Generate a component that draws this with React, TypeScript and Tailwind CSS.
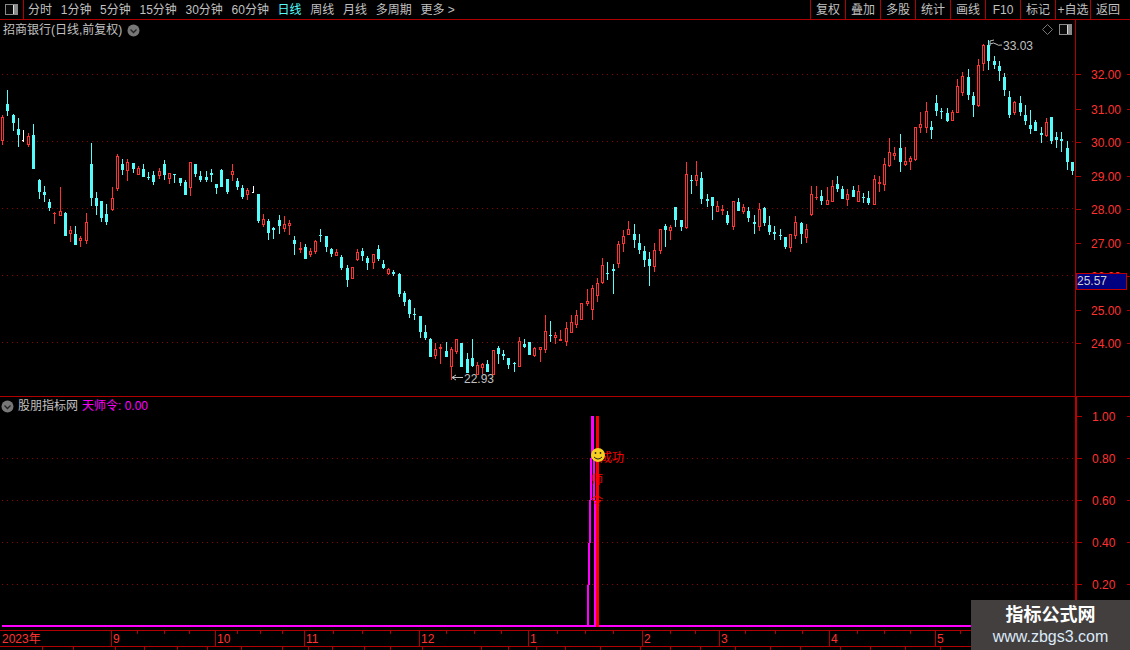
import React from "react";

type Candle = [number, number, number, number, number, "c" | "r" | "w"];

const candles: Candle[] = [
  [2, 117, 141, 115, 145, "r"], [7, 104, 111, 90, 116, "c"], [13, 115, 123, 114, 131, "c"], [18, 129, 135, 118, 147, "c"],
  [23, 140, 141, 130, 142, "w"], [28, 136, 145, 133, 147, "r"], [33, 135, 169, 124, 169, "c"], [39, 180, 192, 179, 199, "c"],
  [44, 192, 195, 186, 202, "c"], [49, 202, 208, 199, 211, "c"], [54, 213, 214, 212, 224, "r"], [60, 211, 216, 187, 216, "r"],
  [65, 213, 236, 212, 236, "c"], [70, 230, 234, 226, 242, "r"], [75, 234, 245, 226, 245, "c"], [80, 238, 241, 236, 247, "r"],
  [86, 222, 241, 213, 244, "r"], [91, 164, 198, 143, 206, "c"], [96, 198, 206, 192, 215, "c"], [101, 201, 218, 201, 222, "c"],
  [106, 214, 222, 204, 225, "c"], [112, 198, 210, 187, 211, "r"], [117, 156, 189, 154, 191, "r"], [122, 164, 170, 159, 175, "c"],
  [127, 162, 171, 159, 181, "r"], [133, 163, 169, 163, 173, "c"], [138, 168, 175, 166, 175, "r"], [143, 169, 177, 164, 177, "c"],
  [148, 177, 178, 172, 180, "c"], [153, 175, 182, 171, 185, "c"], [159, 171, 176, 168, 179, "r"], [164, 164, 175, 160, 180, "c"],
  [169, 173, 179, 173, 184, "r"], [174, 174, 175, 174, 183, "c"], [180, 178, 183, 178, 186, "c"], [185, 182, 195, 180, 195, "c"],
  [190, 162, 188, 162, 196, "r"], [195, 164, 174, 164, 177, "c"], [200, 176, 180, 171, 182, "c"], [206, 177, 180, 171, 182, "c"],
  [211, 173, 175, 169, 182, "c"], [216, 184, 188, 184, 194, "c"], [221, 170, 187, 169, 187, "c"], [227, 179, 192, 179, 194, "c"],
  [232, 171, 175, 164, 181, "r"], [237, 181, 187, 178, 190, "c"], [242, 188, 197, 185, 199, "c"], [247, 190, 195, 188, 200, "r"],
  [253, 192, 193, 186, 193, "w"], [258, 194, 221, 194, 223, "c"], [263, 219, 225, 214, 227, "r"], [268, 221, 233, 219, 240, "c"],
  [273, 228, 230, 227, 239, "c"], [279, 220, 226, 215, 234, "c"], [284, 224, 229, 216, 232, "r"], [289, 223, 226, 220, 235, "r"],
  [294, 240, 244, 236, 255, "c"], [300, 248, 250, 242, 253, "r"], [305, 247, 259, 244, 259, "c"], [310, 251, 255, 248, 257, "r"],
  [315, 241, 252, 240, 254, "r"], [320, 235, 236, 229, 242, "c"], [326, 236, 247, 236, 252, "c"], [331, 249, 254, 248, 257, "c"],
  [336, 252, 256, 249, 256, "r"], [341, 257, 268, 255, 270, "c"], [347, 268, 280, 265, 287, "c"], [352, 267, 279, 267, 279, "r"],
  [357, 252, 260, 249, 261, "r"], [362, 251, 256, 248, 261, "c"], [367, 258, 263, 256, 270, "c"], [373, 254, 263, 254, 269, "r"],
  [378, 249, 259, 245, 261, "c"], [383, 264, 268, 260, 269, "c"], [388, 269, 274, 268, 275, "r"], [393, 272, 274, 270, 276, "c"],
  [399, 274, 294, 273, 297, "c"], [404, 293, 302, 291, 306, "c"], [409, 300, 314, 299, 318, "c"], [414, 314, 315, 308, 320, "c"],
  [420, 316, 332, 316, 338, "c"], [425, 332, 338, 325, 340, "c"], [430, 339, 357, 338, 357, "c"], [435, 349, 356, 343, 359, "r"],
  [440, 347, 349, 344, 364, "r"], [446, 351, 357, 342, 357, "c"], [451, 349, 367, 347, 380, "r"], [456, 339, 352, 339, 354, "r"],
  [461, 343, 367, 343, 367, "c"], [467, 359, 373, 353, 373, "c"], [472, 358, 366, 339, 367, "c"], [477, 365, 375, 362, 375, "r"],
  [482, 364, 368, 363, 374, "r"], [487, 364, 372, 360, 372, "c"], [493, 350, 375, 350, 375, "r"], [498, 348, 354, 346, 364, "c"],
  [503, 354, 356, 350, 360, "c"], [508, 358, 365, 358, 369, "c"], [514, 363, 364, 362, 372, "c"], [519, 341, 367, 337, 367, "r"],
  [524, 344, 347, 339, 348, "c"], [529, 342, 355, 342, 355, "c"], [534, 348, 356, 347, 357, "r"], [540, 347, 350, 347, 362, "r"],
  [545, 331, 350, 315, 353, "r"], [550, 335, 336, 321, 342, "c"], [555, 335, 338, 332, 344, "r"], [560, 339, 341, 330, 341, "r"],
  [566, 328, 342, 322, 346, "r"], [571, 322, 333, 315, 333, "r"], [576, 315, 325, 310, 328, "r"], [581, 303, 320, 303, 320, "r"],
  [587, 301, 304, 289, 306, "r"], [592, 288, 310, 285, 320, "r"], [597, 283, 296, 278, 302, "r"], [602, 265, 283, 258, 284, "r"],
  [607, 273, 274, 262, 280, "c"], [613, 269, 271, 264, 294, "c"], [618, 244, 264, 241, 268, "r"], [623, 236, 244, 230, 252, "r"],
  [628, 229, 235, 221, 235, "r"], [634, 234, 240, 224, 248, "c"], [639, 243, 250, 234, 254, "c"], [644, 251, 260, 246, 267, "c"],
  [649, 259, 266, 252, 286, "c"], [654, 250, 267, 243, 272, "r"], [660, 229, 251, 229, 254, "r"], [665, 226, 230, 224, 247, "c"],
  [670, 227, 231, 225, 240, "r"], [675, 207, 220, 207, 227, "c"], [681, 220, 227, 220, 231, "c"], [686, 174, 228, 162, 229, "r"],
  [691, 180, 181, 175, 194, "c"], [696, 175, 181, 161, 186, "r"], [701, 178, 199, 172, 204, "c"], [707, 199, 201, 194, 207, "c"],
  [712, 197, 206, 197, 220, "c"], [717, 206, 212, 201, 212, "r"], [722, 209, 211, 205, 215, "r"], [727, 215, 223, 211, 225, "c"],
  [733, 201, 227, 201, 230, "r"], [738, 202, 211, 198, 211, "c"], [743, 207, 212, 204, 214, "r"], [748, 211, 218, 207, 222, "c"],
  [754, 222, 224, 215, 234, "c"], [759, 209, 227, 203, 231, "r"], [764, 208, 223, 207, 226, "c"], [769, 225, 232, 216, 235, "c"],
  [774, 232, 234, 226, 240, "c"], [780, 235, 236, 229, 240, "c"], [785, 237, 247, 237, 249, "c"], [790, 234, 248, 234, 252, "r"],
  [795, 222, 236, 216, 239, "r"], [801, 223, 234, 222, 244, "c"], [806, 229, 238, 224, 243, "r"], [811, 194, 215, 186, 216, "r"],
  [816, 197, 198, 186, 200, "r"], [821, 196, 201, 190, 205, "c"], [827, 200, 205, 187, 205, "r"], [832, 186, 202, 180, 202, "r"],
  [837, 184, 189, 176, 192, "c"], [842, 189, 199, 186, 199, "c"], [847, 194, 200, 189, 206, "r"], [853, 190, 197, 186, 197, "c"],
  [858, 191, 202, 185, 202, "r"], [863, 197, 198, 193, 203, "c"], [868, 198, 203, 191, 205, "c"], [874, 179, 205, 175, 205, "r"],
  [879, 182, 184, 176, 192, "r"], [884, 164, 185, 158, 191, "r"], [889, 152, 166, 138, 167, "r"], [894, 153, 156, 147, 160, "r"],
  [900, 148, 162, 134, 172, "c"], [905, 161, 165, 147, 166, "r"], [910, 158, 162, 156, 170, "r"], [915, 127, 160, 127, 161, "r"],
  [920, 124, 128, 112, 133, "r"], [926, 111, 128, 102, 133, "r"], [931, 127, 130, 121, 139, "c"], [936, 103, 111, 95, 116, "c"],
  [941, 111, 112, 108, 119, "c"], [947, 113, 121, 108, 122, "c"], [952, 112, 121, 110, 121, "r"], [957, 86, 113, 79, 113, "r"],
  [962, 76, 93, 72, 96, "r"], [968, 77, 95, 69, 100, "c"], [973, 96, 105, 92, 117, "c"], [978, 65, 106, 59, 107, "r"],
  [983, 45, 64, 44, 71, "r"], [988, 45, 61, 40, 70, "c"], [994, 61, 65, 56, 69, "c"], [999, 66, 71, 61, 81, "c"],
  [1004, 77, 90, 73, 96, "c"], [1009, 97, 115, 91, 118, "c"], [1014, 102, 113, 101, 115, "r"], [1020, 103, 112, 96, 116, "c"],
  [1025, 115, 121, 105, 125, "c"], [1030, 125, 129, 110, 134, "c"], [1035, 122, 131, 120, 131, "c"], [1041, 133, 135, 127, 143, "c"],
  [1046, 122, 136, 118, 137, "r"], [1051, 117, 141, 117, 144, "c"], [1056, 137, 140, 132, 148, "c"], [1061, 139, 141, 132, 152, "c"],
  [1067, 148, 162, 141, 170, "c"], [1072, 162, 171, 162, 175, "c"],
];

const leftTabs = ["分时", "1分钟", "5分钟", "15分钟", "30分钟", "60分钟", "日线", "周线", "月线", "多周期", "更多 >"];
const rightTabs = ["复权", "叠加", "多股", "统计", "画线", "F10", "标记", "+自选", "返回"];

const priceLabels: [string, number][] = [
  ["32.00", 74], ["31.00", 109], ["30.00", 142], ["29.00", 176], ["28.00", 209],
  ["27.00", 243], ["26.00", 276], ["25.00", 310], ["24.00", 343],
];
const indexLabels: [string, number][] = [["1.00", 416], ["0.80", 458], ["0.60", 500], ["0.40", 542], ["0.20", 584]];

const months: [string, number, number][] = [
  ["9", 111, 113], ["10", 215, 217], ["11", 304, 306], ["12", 419, 421], ["1", 528, 530],
  ["2", 642, 644], ["3", 719, 721], ["4", 829, 831], ["5", 935, 937],
];
const minorTicks = [137, 164, 189, 237, 260, 282, 333, 362, 390, 446, 474, 501, 557, 585, 613, 670, 695, 745, 775, 802, 857, 884, 910, 960];
const stripTicks = [42, 73, 115, 144, 177, 207, 241, 282, 308, 332, 364, 390, 422, 481, 508, 536, 565, 600, 640, 670, 700, 735, 770, 800, 840, 870, 905, 940];

// magenta staircase of the signal bar, [x, y, w, h]
const signalBars = [
  [591, 416, 3, 42], [590, 458, 2, 42], [589, 500, 2, 43], [588, 543, 2, 42], [587, 585, 2, 41],
  [593, 458, 2, 42], [594, 500, 2, 126],
];

const RED = "#ff3232";
const CYAN = "#54fcfc";
const GRID = "#8c0000";
const LINE = "#b00000";

const Chevron = () => (
  <svg width="13" height="13" viewBox="0 0 13 13" className="shrink-0">
    <circle cx="6.5" cy="6.5" r="6" fill="#777777" />
    <path d="M3.5 5.5 L6.5 8.5 L9.5 5.5" fill="none" stroke="#222222" strokeWidth="1.3" />
  </svg>
);

const PaneIcon = () => (
  <svg width="13" height="11" viewBox="0 0 13 11" className="shrink-0" shapeRendering="crispEdges">
    <rect x="0" y="0" width="13" height="11" rx="1.5" fill="#8a8a8a" />
    <rect x="1" y="1" width="7" height="9" fill="#0a0a0a" />
    <rect x="8" y="1" width="1" height="9" fill="#dddddd" />
  </svg>
);

const CandleShape = ({ c }: { c: Candle }) => {
  const [x, top, bottom, wickTop, wickBottom, kind] = c;
  const color = kind === "r" ? RED : kind === "w" ? "#ffffff" : CYAN;
  if (kind === "w") {
    return (
      <g fill={color}>
        <rect x={x} y={wickTop} width="1" height={wickBottom - wickTop} />
        <rect x={x - 1} y={top} width="1" height="1" />
      </g>
    );
  }
  return (
    <g fill={color}>
      <rect x={x} y={wickTop} width="1" height={wickBottom - wickTop} />
      <rect x={x - 1} y={top} width="3" height={Math.max(bottom - top, 1)} />
      {kind === "r" && bottom - top > 2 && <rect x={x} y={top + 1} width="1" height={bottom - top - 2} fill="#000000" />}
    </g>
  );
};

const GridLine = ({ y }: { y: number }) => (
  <line x1="2" x2="1075" y1={y + 0.5} y2={y + 0.5} stroke={GRID} strokeDasharray="1 4" />
);

const AxisLabel = ({ text, y, offset }: { text: string; y: number; offset: number }) => (
  <>
    <span className="absolute left-[15px] text-[12px] leading-[14px] text-[#ff3232]" style={{ top: y - offset - 6 }}>
      {text}
    </span>
    <span className="absolute left-0 w-[5px] h-px bg-[#b00000]" style={{ top: y - offset }} />
    <span className="absolute right-0 w-[3px] h-px bg-[#b00000]" style={{ top: y - offset }} />
  </>
);

export default function App() {
  return (
    <div
      className="relative w-[1130px] h-[650px] overflow-hidden bg-black text-[#c0c0c0] text-[12px]"
      style={{ fontFamily: '"Liberation Sans", "Noto Sans CJK SC", sans-serif' }}
    >
      {/* toolbar */}
      <div className="flex h-[20px] items-stretch border-b border-[#b00000]">
        <div className="flex w-[24px] items-center justify-center border-r border-[#b00000]">
          <PaneIcon />
        </div>
        <div className="flex items-center gap-[8.7px] pl-[4px]">
          {leftTabs.map((t) => (
            <span key={t} className={t === "日线" ? "text-[#54fcfc]" : ""}>
              {t}
            </span>
          ))}
        </div>
        <div className="ml-auto flex mr-[5px]">
          {rightTabs.map((t) => (
            <span key={t} className="flex w-[35px] items-center justify-center border-l border-[#b00000]">
              {t}
            </span>
          ))}
        </div>
      </div>

      {/* price pane */}
      <div className="flex h-[376px]">
        <div className="relative w-[1075px]">
          <div className="absolute left-[3px] top-[1px] flex items-center gap-[5px]">
            <span>招商银行(日线,前复权)</span>
            <Chevron />
          </div>
          <svg width="1075" height="376" viewBox="0 20 1075 376" shapeRendering="crispEdges" className="block">
            {[74, 141, 208, 275, 342].map((y) => (
              <GridLine key={y} y={y} />
            ))}
            {candles.map((c) => (
              <CandleShape key={c[0]} c={c} />
            ))}
            <g fill="none" stroke="#c0c0c0" shapeRendering="auto">
              <path d="M452 377.5 H463 M452 377.5 L456 375 M452 377.5 L456 380" />
              <path d="M990 41 L990 46 M990 41 L994 40 M990 44 Q994 42 996 44 T1002 45" />
            </g>
            <g fill="#c0c0c0" fontSize="12" shapeRendering="auto">
              <text x="464" y="383">22.93</text>
              <text x="1003" y="50">33.03</text>
            </g>
          </svg>
          <div className="absolute right-[3px] top-[4px] flex items-center gap-[6px]">
            <svg width="11" height="11" viewBox="0 0 11 11">
              <path d="M5.5 0.5 L10.5 5.5 L5.5 10.5 L0.5 5.5 Z" fill="none" stroke="#777777" />
            </svg>
            <PaneIcon />
          </div>
        </div>
        <div className="relative flex-1 border-l border-[#b00000]">
          {priceLabels.map(([text, y]) => (
            <AxisLabel key={text} text={text} y={y} offset={20} />
          ))}
          <div className="absolute left-0 top-[253px] h-[17px] w-[51px] border border-[#c00000] bg-[#000080] text-[12px] leading-[15px] text-[#d0d0d0]">
            25.57
          </div>
        </div>
      </div>

      {/* indicator pane */}
      <div className="flex h-[234px] border-t border-[#b00000]">
        <div className="relative w-[1075px]">
          <div className="absolute left-[1px] top-0 flex items-center gap-[4px]">
            <Chevron />
            <span>股朋指标网</span>
            <span className="text-[#ff00ff]">天师令: 0.00</span>
          </div>
          <svg width="1075" height="233" viewBox="0 397 1075 233" shapeRendering="crispEdges" className="block">
            {[458, 500, 542, 584].map((y) => (
              <GridLine key={y} y={y} />
            ))}
            <rect x="2" y="625" width="1073" height="2" fill="#ff00ff" />
            {signalBars.map(([x, y, w, h]) => (
              <rect key={`${x}-${y}`} x={x} y={y} width={w} height={h} fill="#ff00ff" />
            ))}
            <rect x="596" y="416" width="3" height="211" fill="#ff0000" />
            <g fill="#ff0000" fontSize="12" shapeRendering="auto">
              <text x="600" y="462">成功</text>
              <text x="591" y="484">师</text>
              <text x="591" y="505">令</text>
            </g>
            <g shapeRendering="auto">
              <circle cx="598" cy="455" r="7" fill="#f5d020" />
              <circle cx="595.5" cy="453" r="0.9" fill="#222222" />
              <circle cx="600.5" cy="453" r="0.9" fill="#222222" />
              <path d="M594 457 Q598 461 602 457" fill="none" stroke="#222222" />
            </g>
          </svg>
        </div>
        <div className="relative flex-1 border-l-2 border-[#c00000]">
          {indexLabels.map(([text, y]) => (
            <AxisLabel key={text} text={text} y={y} offset={397} />
          ))}
        </div>
      </div>

      {/* time axis */}
      <svg width="1130" height="20" viewBox="0 630 1130 20" shapeRendering="crispEdges" className="block">
        <rect x="0" y="630" width="1130" height="1" fill={LINE} />
        <rect x="0" y="646" width="1130" height="1" fill={LINE} />
        {months.map(([label, x]) => (
          <rect key={label} x={x} y="630" width="1" height="16" fill={LINE} />
        ))}
        {minorTicks.map((x) => (
          <rect key={x} x={x} y="631" width="1" height="3" fill={LINE} />
        ))}
        {stripTicks.map((x) => (
          <rect key={x} x={x} y="647" width="1" height="3" fill={LINE} />
        ))}
        <g fill={RED} fontSize="12" shapeRendering="auto">
          <text x="2" y="643">2023年</text>
          {months.map(([label, , x]) => (
            <text key={label} x={x} y="643">{label}</text>
          ))}
        </g>
      </svg>

      {/* watermark */}
      <div className="absolute bottom-0 right-0 flex h-[50px] w-[159px] flex-col items-center justify-center bg-[#433f3f]">
        <span className="text-[18px] font-bold leading-[24px] text-white">指标公式网</span>
        <span className="text-[16px] leading-[20px] text-[#dceaf8]">www.zbgs3.com</span>
      </div>
    </div>
  );
}
